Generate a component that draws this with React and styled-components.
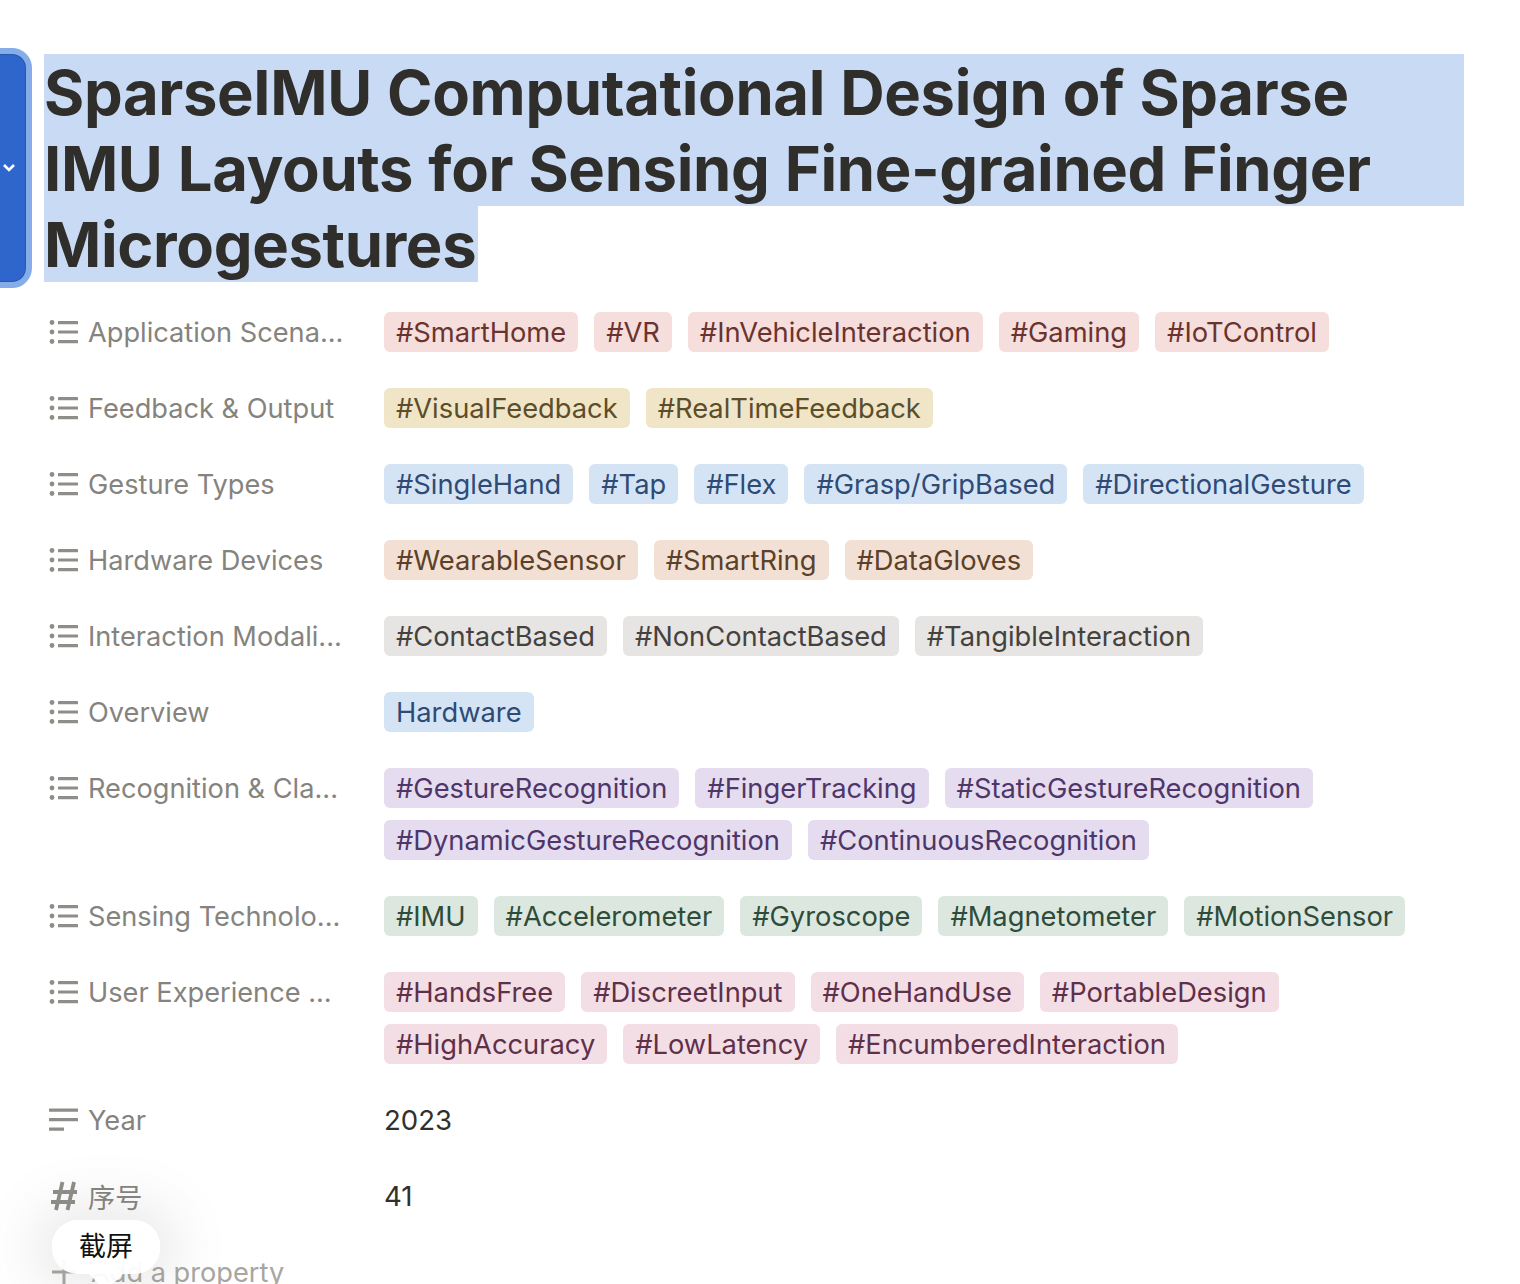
import React from "react"
import styled, { createGlobalStyle } from "styled-components"

const colors = {
  red: ["#f6dedc", "#6a332e"],
  yellow: ["#f0e5c6", "#5c4d2b"],
  blue: ["#d5e4f5", "#2f4b75"],
  brown: ["#f1e0d3", "#5c4029"],
  gray: ["#e6e5e3", "#45423e"],
  purple: ["#e5dcf0", "#4e3669"],
  green: ["#dce8df", "#2f4c3a"],
  pink: ["#f3dee6", "#5f3049"],
}

const rows = [
  { label: "Application Scena...", color: "red", tags: ["#SmartHome", "#VR", "#InVehicleInteraction", "#Gaming", "#IoTControl"] },
  { label: "Feedback & Output", color: "yellow", tags: ["#VisualFeedback", "#RealTimeFeedback"] },
  { label: "Gesture Types", color: "blue", tags: ["#SingleHand", "#Tap", "#Flex", "#Grasp/GripBased", "#DirectionalGesture"] },
  { label: "Hardware Devices", color: "brown", tags: ["#WearableSensor", "#SmartRing", "#DataGloves"] },
  { label: "Interaction Modali...", color: "gray", tags: ["#ContactBased", "#NonContactBased", "#TangibleInteraction"] },
  { label: "Overview", color: "blue", tags: ["Hardware"] },
  { label: "Recognition & Cla...", color: "purple", tags: ["#GestureRecognition", "#FingerTracking", "#StaticGestureRecognition", "#DynamicGestureRecognition", "#ContinuousRecognition"] },
  { label: "Sensing Technolo...", color: "green", tags: ["#IMU", "#Accelerometer", "#Gyroscope", "#Magnetometer", "#MotionSensor"] },
  { label: "User Experience ...", color: "pink", tags: ["#HandsFree", "#DiscreetInput", "#OneHandUse", "#PortableDesign", "#HighAccuracy", "#LowLatency", "#EncumberedInteraction"] },
]

function ListIcon() {
  return (
    <svg width="30" height="26" viewBox="0 0 30 26" fill="#8f8d88">
      <circle cx="3" cy="3.5" r="2.4" />
      <circle cx="3" cy="13" r="2.4" />
      <circle cx="3" cy="22.5" r="2.4" />
      <rect x="9" y="2" width="20" height="3.2" rx="0.5" />
      <rect x="9" y="11.4" width="20" height="3.2" rx="0.5" />
      <rect x="9" y="21" width="20" height="3.2" rx="0.5" />
    </svg>
  )
}

function TextIcon() {
  return (
    <svg width="30" height="24" viewBox="0 0 30 24" fill="#8f8d88">
      <rect x="0" y="0.5" width="29" height="3.2" rx="0.5" />
      <rect x="0" y="10" width="29" height="3.2" rx="0.5" />
      <rect x="0" y="19.5" width="15" height="3.2" rx="0.5" />
    </svg>
  )
}

function NumberIcon() {
  return (
    <svg width="30" height="32" viewBox="0 0 30 32" fill="none" stroke="#8f8d88" strokeWidth="3.8">
      <path d="M13.5 2 7 30M25 2 18.5 30M4 12h24M2 22h24" />
    </svg>
  )
}

function PlusIcon() {
  return (
    <svg width="30" height="30" viewBox="0 0 30 30" fill="none" stroke="#a8a6a0" strokeWidth="3">
      <path d="M15 3v24M3 15h24" />
    </svg>
  )
}

export default function App() {
  return (
    <>
      <GlobalStyle />
      <Page>
        <Handle>
          <svg width="14" height="10" viewBox="0 0 14 10" fill="none" stroke="#fff" strokeWidth="2.6">
            <path d="M2 2l5 5 5-5" />
          </svg>
        </Handle>
        <Title>SparseIMU Computational Design of Sparse IMU Layouts for Sensing Fine-grained Finger Microgestures</Title>
        <Properties>
          {rows.map((row) => (
            <Row key={row.label}>
              <Label>
                <IconSlot>
                  <ListIcon />
                </IconSlot>
                {row.label}
              </Label>
              <Tags>
                {row.tags.map((tag) => (
                  <Tag key={tag} $color={row.color}>
                    {tag}
                  </Tag>
                ))}
              </Tags>
            </Row>
          ))}
          <Row>
            <Label>
              <IconSlot>
                <TextIcon />
              </IconSlot>
              Year
            </Label>
            <Value>2023</Value>
          </Row>
          <Row>
            <Label>
              <IconSlot>
                <NumberIcon />
              </IconSlot>
              序号
            </Label>
            <Value>41</Value>
          </Row>
          <Row>
            <Label $muted>
              <IconSlot>
                <PlusIcon />
              </IconSlot>
              Add a property
            </Label>
          </Row>
        </Properties>
        <Tooltip>截屏</Tooltip>
      </Page>
    </>
  )
}

const GlobalStyle = createGlobalStyle`
  html, body {
    margin: 0;
    height: 1284px;
    overflow: hidden;
    background: #fff;
  }
`

const Page = styled.div`
  position: relative;
  height: 1284px;
  overflow: hidden;
  padding: 54px 56px 0 44px;
  box-sizing: border-box;
  font-family: Inter, "Noto Sans CJK SC", sans-serif;
  color: #32302c;
`

const Handle = styled.div`
  position: absolute;
  left: -20px;
  top: 48px;
  width: 52px;
  height: 240px;
  box-sizing: border-box;
  display: flex;
  align-items: center;
  justify-content: flex-end;
  padding-right: 10px;
  background: #2f66cc;
  border: 6px solid #85ade9;
  border-radius: 20px;
  box-shadow: inset 0 0 0 1px #2857ac;
`

const Title = styled.h1`
  margin: 0 0 18px;
  padding-top: 1px;
  height: 227px;
  font-size: 61.5px;
  line-height: 76px;
  font-weight: 700;
  letter-spacing: -0.35px;
  word-spacing: 1px;
  color: #2f2e2a;
  background:
    linear-gradient(#c9daf5, #c9daf5) 0 0 / 100% 152px no-repeat,
    linear-gradient(#c9daf5, #c9daf5) 0 152px / 434px 76px no-repeat;
`

const Properties = styled.div`
  display: flex;
  flex-direction: column;
  gap: 36px;
  margin-top: 30px;
`

const Row = styled.div`
  display: grid;
  grid-template-columns: 340px 1fr;
  min-height: 40px;
`

const Label = styled.div`
  display: flex;
  align-items: center;
  gap: ${(props) => (props.$muted ? "12px" : "9px")};
  height: 40px;
  padding-left: 5px;
  font-size: 27.2px;
  white-space: nowrap;
  color: ${(props) => (props.$muted ? "#a8a6a0" : "#85837e")};
`

const IconSlot = styled.span`
  display: flex;
  align-items: center;
  justify-content: center;
  width: 30px;
  height: 30px;
`

const Tags = styled.div`
  display: flex;
  flex-wrap: wrap;
  gap: 12px 16px;
`

const Tag = styled.span`
  display: inline-flex;
  align-items: center;
  height: 40px;
  padding: 0 12px;
  border-radius: 6px;
  font-size: 27.3px;
  white-space: nowrap;
  background: ${(props) => colors[props.$color][0]};
  color: ${(props) => colors[props.$color][1]};
`

const Value = styled.div`
  display: flex;
  align-items: center;
  height: 40px;
  font-size: 27.6px;
  color: #32302c;
`

const Tooltip = styled.div`
  position: absolute;
  left: 52px;
  top: 1220px;
  width: 108px;
  height: 54px;
  padding-bottom: 5px;
  box-sizing: border-box;
  display: flex;
  align-items: center;
  justify-content: center;
  border-radius: 26px;
  font-size: 27px;
  color: #111;
  background: rgba(255, 255, 255, 0.94);
  box-shadow: 0 0 50px 20px rgba(120, 120, 120, 0.14);

  &::after {
    content: "";
    position: absolute;
    left: 42px;
    bottom: -12px;
    width: 24px;
    height: 24px;
    transform: rotate(45deg);
    background: rgba(255, 255, 255, 0.94);
  }
`
